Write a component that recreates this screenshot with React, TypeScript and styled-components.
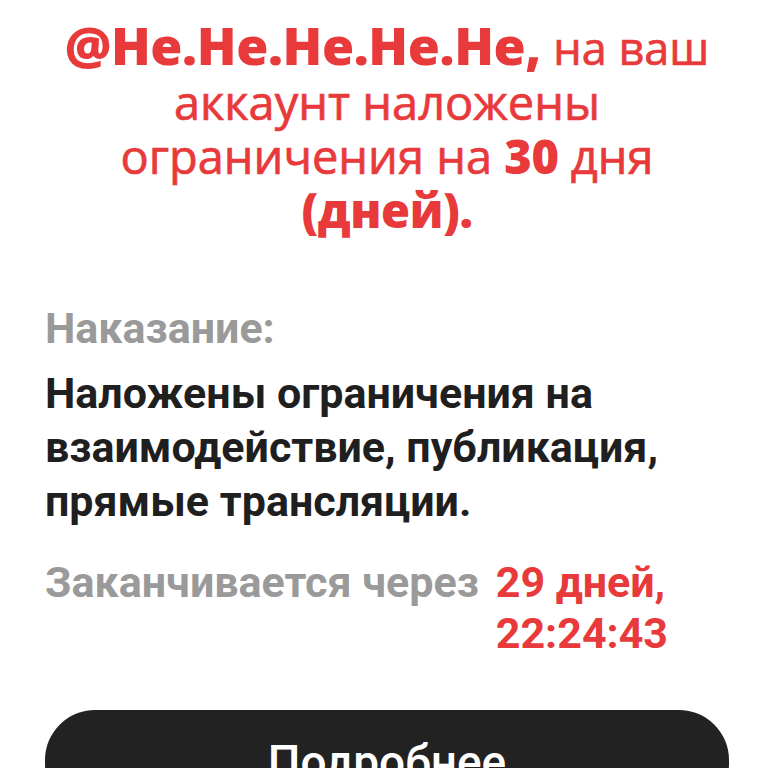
import React from "react";
import styled, { createGlobalStyle } from "styled-components";

const GlobalStyle = createGlobalStyle`
  html, body {
    margin: 0;
    padding: 0;
    background: #ffffff;
  }
  body {
    font-family: Roboto, "Liberation Sans", sans-serif;
    overflow: hidden;
  }
`;

const Screen = styled.div`
  width: 768px;
  height: 768px;
  overflow: hidden;
  background: #ffffff;
  box-sizing: border-box;
  padding: 18px 39px 0 45px;
  display: flex;
  flex-direction: column;
`;

const Title = styled.h1`
  margin: 0;
  text-align: center;
  color: #e8393b;
  font-family: "Open Sans", "Noto Sans", sans-serif;
  font-weight: 400;
  font-size: 47px;
  line-height: 54px;
  white-space: nowrap;
  -webkit-text-stroke: 0.7px #e8393b;
`;

const Small = styled.span`
  font-size: 45px;
`;

const Strong = styled.b<{ $size?: number }>`
  font-weight: 800;
  font-size: ${(p) => p.$size ?? 47}px;
  letter-spacing: -0.4px;
  -webkit-text-stroke: 0;
`;

const Label = styled.div`
  margin-top: 64px;
  color: #9a9a9a;
  font-size: 43px;
  font-weight: 700;
  line-height: 54px;
`;

const Punishment = styled.p`
  margin: 11px 0 0;
  color: #1f1f1f;
  font-size: 43px;
  font-weight: 700;
  line-height: 54px;
`;

const EndsRow = styled.div`
  display: flex;
  align-items: flex-start;
  gap: 17px;
  margin-top: 29px;
  font-size: 43px;
  font-weight: 700;
  line-height: 51px;
`;

const EndsLabel = styled.span`
  color: #9a9a9a;
`;

const Countdown = styled.span`
  color: #e8393b;
  display: flex;
  flex-direction: column;
`;

const MoreButton = styled.button`
  margin-top: 51px;
  flex-shrink: 0;
  width: 100%;
  height: 104px;
  border: none;
  border-radius: 50px;
  background: #222222;
  color: #ffffff;
  font-family: Roboto, "Liberation Sans", sans-serif;
  font-size: 46px;
  font-weight: 500;
  line-height: 54px;
  padding: 0;
  display: block;
  text-align: center;
  box-sizing: border-box;
  cursor: pointer;
`;

export default function App() {
  return (
    <>
      <GlobalStyle />
      <Screen>
        <Title>
          <Strong $size={52}>@Не.Не.Не.Не.Не,</Strong> <Small>на ваш</Small>
          <br />
          аккаунт наложены
          <br />
          ограничения на <Strong>30</Strong> дня
          <br />
          <Strong>(дней).</Strong>
        </Title>
        <Label>Наказание:</Label>
        <Punishment>
          Наложены ограничения на взаимодействие, публикация, прямые трансляции.
        </Punishment>
        <EndsRow>
          <EndsLabel>Заканчивается через</EndsLabel>
          <Countdown>
            <span>29 дней,</span>
            <span>22:24:43</span>
          </Countdown>
        </EndsRow>
        <MoreButton>Подробнее</MoreButton>
      </Screen>
    </>
  );
}
